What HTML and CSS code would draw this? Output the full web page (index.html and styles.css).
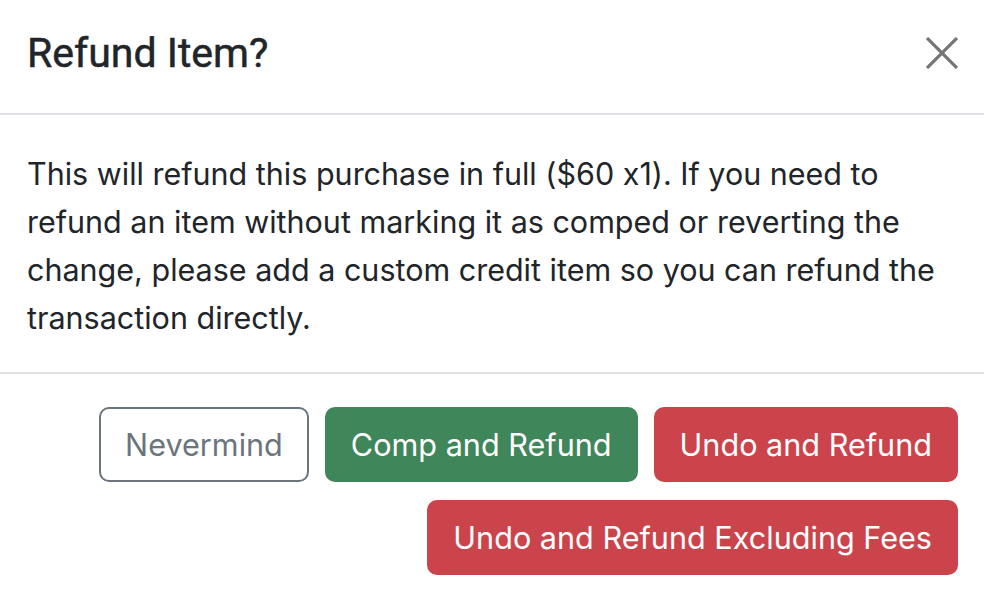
FILE: index.html
```html
<!DOCTYPE html>
<html lang="en">
<head>
<meta charset="utf-8">
<title>Refund Item?</title>
<link rel="stylesheet" href="styles.css">
</head>
<body>
<div class="modal">
  <div class="modal-header">
    <h5 class="modal-title">Refund Item?</h5>
    <button class="btn-close" type="button" aria-label="Close">
      <svg viewBox="0 0 32 32" width="32" height="32"><path d="M1 1 L31 31 M31 1 L1 31" stroke="#757575" stroke-width="3.2" fill="none"/></svg>
    </button>
  </div>
  <div class="modal-body">
    <p>This will refund this purchase in full ($60 x1). If you need to refund an item without marking it as comped or reverting the change, please add a custom credit item so you can refund the transaction directly.</p>
  </div>
  <div class="modal-footer">
    <button class="btn btn-outline">Nevermind</button>
    <button class="btn btn-success">Comp and Refund</button>
    <button class="btn btn-danger">Undo and Refund</button>
    <button class="btn btn-danger">Undo and Refund Excluding Fees</button>
  </div>
</div>
</body>
</html>
```

FILE: styles.css
```css
html, body {
  margin: 0;
  padding: 0;
  background: #fff;
}
body {
  font-family: Inter, "Liberation Sans", sans-serif;
  font-feature-settings: "calt" 0;
  color: #212529;
}
.modal {
  width: 984px;
}
.modal-header {
  display: flex;
  align-items: center;
  justify-content: space-between;
  height: 115px;
  padding: 0 26px 0 27px;
  box-sizing: border-box;
  border-bottom: 2px solid #dee2e6;
}
.modal-title {
  margin: 0;
  font-family: Roboto, "Liberation Sans", sans-serif;
  font-size: 41px;
  font-weight: 400;
  line-height: 1.2;
  margin-top: -6px;
  -webkit-text-stroke: 0.5px #212529;
}
.btn-close {
  border: 0;
  background: none;
  padding: 0;
  width: 32px;
  height: 32px;
  margin-top: -8px;
}
.btn-close svg {
  display: block;
}
.modal-body {
  padding: 35px 26px 30px 27px;
  border-bottom: 2px solid #dee2e6;
}
.modal-body p {
  margin: 0;
  font-size: 30.5px;
  line-height: 48px;
  width: 930px;
}
.modal-footer {
  display: flex;
  flex-wrap: wrap;
  justify-content: flex-end;
  gap: 18px 16px;
  padding: 33px 26px 24px 27px;
}
.btn {
  font-family: Inter, "Liberation Sans", sans-serif;
  font-size: 30.6px;
  line-height: 48px;
  padding: 12px 24px;
  border-radius: 10px;
  border: 2px solid transparent;
  box-sizing: border-box;
  height: 75px;
}
.btn-outline {
  background: #fff;
  border-color: #6c757d;
  color: #6c757d;
}
.btn-success {
  background: #3f865a;
  border-color: #3f865a;
  color: #fff;
}
.btn-danger {
  background: #cb444b;
  border-color: #cb444b;
  color: #fff;
}
```
